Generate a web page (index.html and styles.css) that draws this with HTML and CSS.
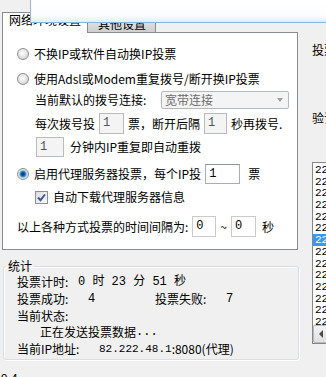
FILE: index.html
```html
<!DOCTYPE html>
<html lang="zh-CN">
<head>
  <meta charset="UTF-8" />
  <meta name="viewport" content="width=device-width, initial-scale=1.0" />
  <title>投票设置</title>
  <link rel="stylesheet" href="styles.css">
</head>
<body>
  <!-- janela por cima -->
  <div class="popup"></div>

  <div class="main">
    <div class="left">
      <div class="tabs">
        <div class="tab active">网络环境设置</div>
        <div class="tab">其他设置</div>
      </div>

      <div class="tab-page">
        <div class="row r1"><span class="radio"></span>不换IP或软件自动换IP投票</div>
        <div class="row r2"><span class="radio"></span>使用Adsl或Modem重复拨号/断开换IP投票</div>
        <div class="row r3 sub">当前默认的拨号连接:
          <div class="combo"><span>宽带连接</span><i class="arrow"></i></div>
        </div>
        <div class="row r4 sub">每次拨号投<span class="box dis w25">1</span>票，断开后隔<span class="box dis w23">1</span>秒再拨号.</div>
        <div class="row r5 sub"><span class="box dis w28 first">1</span>分钟内IP重复即自动重拨</div>
        <div class="row r6"><span class="radio on"></span>启用代理服务器投票，每个IP投<span class="box w35">1</span><span class="after">票</span></div>
        <div class="row r7 sub">
          <span class="check">
            <svg width="11" height="11" viewBox="0 0 11 11"><path d="M2 5.5 L4.5 8.2 L9 2.5" fill="none" stroke="#3b5998" stroke-width="2"/></svg>
          </span>自动下载代理服务器信息
        </div>
        <div class="row r8">以上各种方式投票的时间间隔为:<span class="box light w24">0</span>~<span class="box light w25">0</span><span class="after2">秒</span></div>
      </div>

      <fieldset class="stats">
        <legend>统计</legend>
        <div class="srow s1"><span class="k w61">投票计时:</span><span class="m">0 时 23 分 51 秒</span></div>
        <div class="srow s2"><span class="k w71">投票成功:</span><span class="m w67">4</span><span class="k w71">投票失败:</span><span class="m">7</span></div>
        <div class="srow s3">当前状态:</div>
        <div class="srow s4 status">正在发送投票数据<span class="m">...</span></div>
        <div class="srow s5"><span class="k w82">当前IP地址:</span><span class="m ip">82.222.48.1</span>:8080(代理)</div>
      </fieldset>
    </div>

    <div class="right">
      <div class="lbl lbl1">投票网址:</div>
      <div class="lbl lbl2">验证码:</div>
      <div class="list">
        <div class="items">
          <div class="item">221.7.248.90:8080</div>
          <div class="item">222.88.76.14:80</div>
          <div class="item">221.130.17.8:80</div>
          <div class="item">222.124.35.2:8080</div>
          <div class="item">221.12.89.6:3128</div>
          <div class="item">222.66.80.11:80</div>
          <div class="item sel">222.222.48.1:8080</div>
          <div class="item">221.203.154.5:80</div>
          <div class="item">222.35.7.132:8080</div>
          <div class="item">221.195.40.14:80</div>
          <div class="item">222.68.207.9:3128</div>
          <div class="item">221.11.25.170:80</div>
          <div class="item">222.89.154.3:8080</div>
          <div class="item">221.2.174.99:80</div>
        </div>
        <div class="hscroll"><span class="sbtn"><i></i></span></div>
      </div>
    </div>
  </div>

  <div class="version">9.4</div>
</body>
</html>
```

FILE: styles.css
```css
html,
body {
  margin: 0;
  overflow: hidden;
}

body {
  width: 326px;
  height: 377px;
  position: relative;
  background: #f0f0f0;
  font-family: "Noto Sans CJK SC", "Liberation Sans", sans-serif;
  font-size: 12px;
  line-height: 14px;
  color: #000;
}

.popup {
  position: absolute;
  top: 0;
  left: 30px;
  right: 0;
  height: 22px;
  background: linear-gradient(#ffffff, #fbfdff 70%, #e2edf8);
  border-left: 1px solid #9db2c7;
  border-bottom: 1px solid #8fb1d3;
  z-index: 5;
}

.main {
  display: flex;
  align-items: flex-start;
}

.left {
  flex: none;
  width: 296px;
  margin: 12px 0 0 2px;
}

/* abas */
.tabs {
  display: flex;
  align-items: flex-end;
  height: 20px;
  position: relative;
  z-index: 1;
}

.tab {
  height: 18px;
  box-sizing: border-box;
  margin-left: -1px;
  padding: 2px 9px 0 10px;
  border: 1px solid #898c95;
  border-bottom: none;
  background: linear-gradient(#f3f3f3, #ebebeb 50%, #dddddd 50%, #cfcfcf);
}

.tab.active {
  height: 21px;
  margin: 0 0 -1px 0;
  padding: 0 6px;
  background: #fff;
  position: relative;
  z-index: 2;
}

.tab-page {
  height: 218px;
  box-sizing: border-box;
  border: 1px solid #898c95;
  background: #fff;
  display: flex;
  flex-direction: column;
  padding-left: 14px;
}

.row {
  display: flex;
  align-items: center;
  flex: none;
  white-space: nowrap;
}

.r1 { margin-top: 9px; height: 24px; }
.r2 { height: 25px; }
.r3 { height: 18px; }
.r4 { margin-top: 4px; height: 21px; }
.r5 { margin-top: 3px; height: 20px; }
.r6 { margin-top: 7px; height: 20px; }
.r7 { margin-top: 6px; height: 14px; }
.r8 { margin-top: 12px; height: 21px; }

.sub {
  padding-left: 18px;
}

.radio {
  width: 12px;
  height: 12px;
  box-sizing: border-box;
  border-radius: 50%;
  border: 1px solid #8e8f8f;
  background: radial-gradient(circle at 45% 40%, #ffffff 0, #f2f2f2 2px, #d6d6d6 6px);
  margin-right: 5px;
  flex: none;
}

.radio.on {
  background: radial-gradient(circle, #0b3c74 0, #11508f 1.5px, #3b8fdc 2.8px, #8fcaf3 3.6px, #dcdcdc 4.2px, #f4f4f4 6px);
}

.check {
  width: 13px;
  height: 13px;
  box-sizing: border-box;
  border: 1px solid #8e8f8f;
  background: linear-gradient(135deg, #dcdcdc, #fbfbfb);
  margin-right: 5px;
  flex: none;
  display: flex;
}

.combo {
  width: 128px;
  height: 18px;
  box-sizing: border-box;
  margin: 0 8px 0 auto;
  border: 1px solid #b5b9bc;
  border-radius: 2px;
  background: #f4f4f4;
  color: #6d6d6d;
  display: flex;
  align-items: center;
  padding-left: 3px;
}

.combo span {
  flex: 1;
}

.arrow {
  width: 0;
  height: 0;
  margin-right: 5px;
  border-left: 3.5px solid transparent;
  border-right: 3.5px solid transparent;
  border-top: 4px solid #a0a0a0;
}

.box {
  display: flex;
  align-items: center;
  align-self: stretch;
  box-sizing: border-box;
  margin: 0 4px;
  padding: 0 0 1px 3px;
  border: 1px solid #abadb3;
  border-top-color: #8f939a;
  background: #fff;
  font-family: "Liberation Mono", "DejaVu Sans Mono", monospace;
  font-size: 12px;
}

.box.dis {
  background: #f4f4f4;
  border-color: #b9bcbf;
  color: #555;
}

.box.light {
  border-color: #c9cbcf;
}

.box.first {
  margin-left: 1px;
  margin-right: 6px;
}

.w23 { width: 23px; }
.w24 { width: 24px; }
.w25 { width: 25px; }
.w28 { width: 28px; }
.w35 { width: 35px; }

.after {
  margin-left: 4px;
}

.after2 {
  margin-left: 2px;
}

/* estatísticas */
.stats {
  width: 296px;
  box-sizing: border-box;
  margin: 9px 0 0 1px;
  padding: 0;
  border: 1px solid #d5dfe5;
  border-radius: 3px;
  box-shadow: inset 1px 1px 0 #fff, 1px 1px 0 #fff;
}

.stats legend {
  margin-left: 2px;
  padding: 0 2px;
}

.srow {
  display: flex;
  align-items: center;
  padding-left: 13px;
  white-space: pre;
}

.s1 { height: 17px; }
.s2 { height: 17px; }
.s3 { height: 18px; }
.s4 { height: 14px; }
.s5 { height: 20px; }

.status {
  padding-left: 36px;
}

.k {
  display: inline-block;
  flex: none;
}

.w61 { width: 61px; }
.w71 { width: 71px; }
.w82 { width: 82px; }
.w67 { width: 67px; display: inline-block; }

.m {
  font-family: "Liberation Mono", "Noto Sans CJK SC", monospace;
}

.ip {
  font-size: 11px;
}

/* coluna direita */
.right {
  flex: none;
  width: 110px;
  margin-left: 14px;
}

.lbl {
  white-space: nowrap;
}

.lbl1 { margin-top: 43px; }
.lbl2 { margin-top: 54px; }

.list {
  margin-top: 37px;
  height: 182px;
  box-sizing: border-box;
  border: 1px solid #828790;
  background: #fff;
  display: flex;
  flex-direction: column;
}

.items {
  flex: 1;
  overflow: hidden;
  padding-top: 1px;
}

.item {
  height: 11.7px;
  line-height: 12px;
  padding-left: 2px;
  white-space: nowrap;
  font-family: "Liberation Mono", monospace;
  font-size: 11px;
}

.item.sel {
  background: #3399ff;
  color: #fff;
}

.hscroll {
  height: 18px;
  background: #e8e8e8;
  display: flex;
}

.sbtn {
  width: 16px;
  box-sizing: border-box;
  border: 1px solid #b9b9b9;
  border-radius: 2px;
  background: linear-gradient(#f4f4f4, #e0e0e0);
  display: flex;
  align-items: center;
  justify-content: center;
}

.sbtn i {
  width: 0;
  height: 0;
  border-top: 4px solid transparent;
  border-bottom: 4px solid transparent;
  border-right: 4px solid #4a4a4a;
}

.version {
  margin-top: 11px;
  padding-left: 1px;
}
```
